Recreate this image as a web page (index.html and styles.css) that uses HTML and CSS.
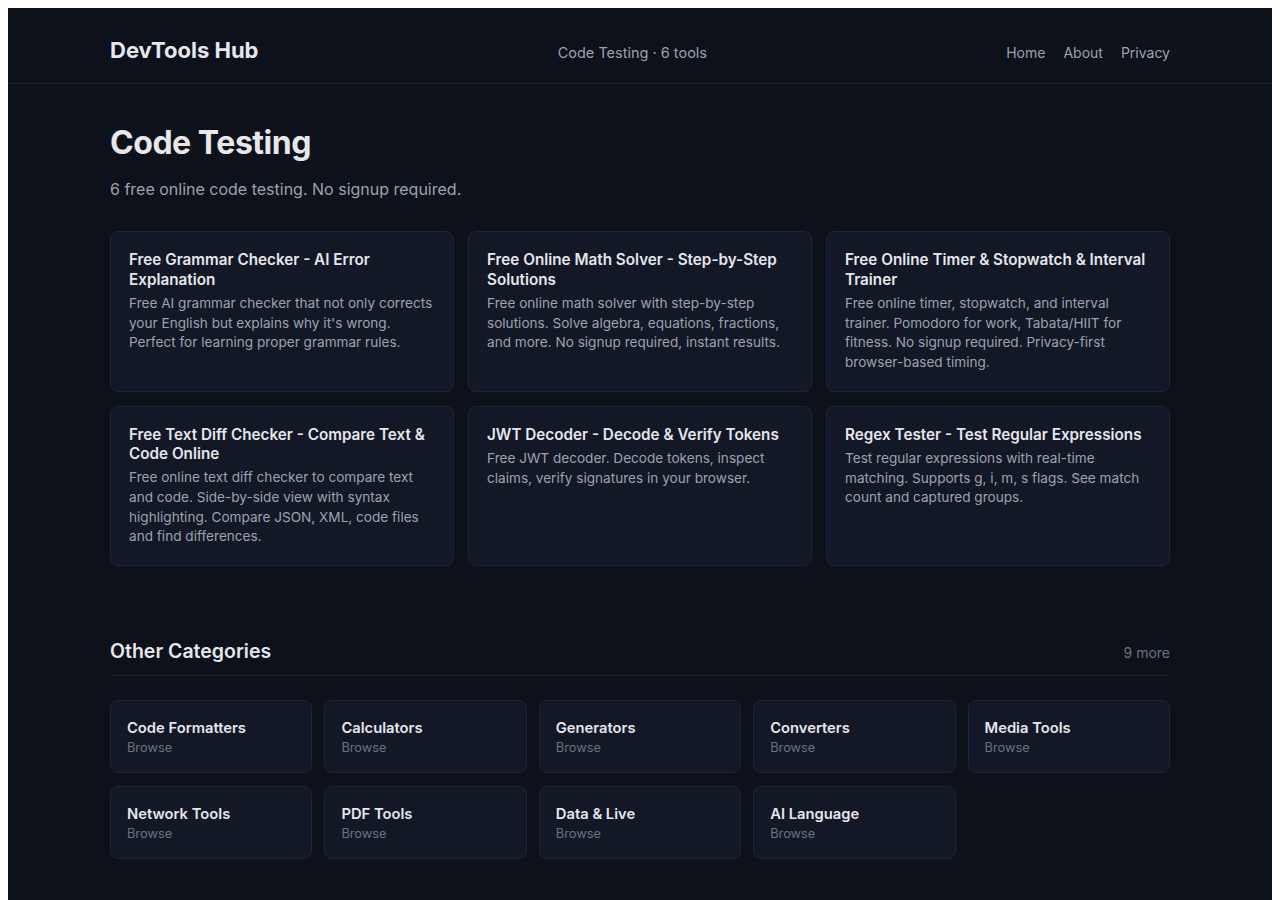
FILE: index.html
```html
<!DOCTYPE html>
<html lang="en">
<head>
<meta charset="utf-8">
<title>Code Testing - DevTools Hub</title>
<link rel="stylesheet" href="styles.css">
</head>
<body>
<div class="page">
  <header class="site-header">
    <div class="container header-inner">
      <a class="logo" href="#">DevTools Hub</a>
      <span class="crumb">Code Testing · 6 tools</span>
      <nav class="nav">
        <a href="#">Home</a>
        <a href="#">About</a>
        <a href="#">Privacy</a>
      </nav>
    </div>
  </header>
  <main class="container main">
    <h1 class="page-title">Code Testing</h1>
    <p class="page-sub">6 free online code testing. No signup required.</p>
    <div class="tool-grid">
      <a class="tool-card" href="#">
        <h2 class="tool-title">Free Grammar Checker - AI Error Explanation</h2>
        <p class="tool-desc">Free AI grammar checker that not only corrects your English but explains why it's wrong. Perfect for learning proper grammar rules.</p>
      </a>
      <a class="tool-card" href="#">
        <h2 class="tool-title">Free Online Math Solver - Step-by-Step Solutions</h2>
        <p class="tool-desc">Free online math solver with step-by-step solutions. Solve algebra, equations, fractions, and more. No signup required, instant results.</p>
      </a>
      <a class="tool-card" href="#">
        <h2 class="tool-title">Free Online Timer &amp; Stopwatch &amp; Interval Trainer</h2>
        <p class="tool-desc">Free online timer, stopwatch, and interval trainer. Pomodoro for work, Tabata/HIIT for fitness. No signup required. Privacy-first browser-based timing.</p>
      </a>
      <a class="tool-card" href="#">
        <h2 class="tool-title">Free Text Diff Checker - Compare Text &amp; Code Online</h2>
        <p class="tool-desc">Free online text diff checker to compare text and code. Side-by-side view with syntax highlighting. Compare JSON, XML, code files and find differences.</p>
      </a>
      <a class="tool-card" href="#">
        <h2 class="tool-title">JWT Decoder - Decode &amp; Verify Tokens</h2>
        <p class="tool-desc">Free JWT decoder. Decode tokens, inspect claims, verify signatures in your browser.</p>
      </a>
      <a class="tool-card" href="#">
        <h2 class="tool-title">Regex Tester - Test Regular Expressions</h2>
        <p class="tool-desc">Test regular expressions with real-time matching. Supports g, i, m, s flags. See match count and captured groups.</p>
      </a>
    </div>

    <section class="other">
      <div class="other-head">
        <h2 class="other-title">Other Categories</h2>
        <span class="other-count">9 more</span>
      </div>
      <div class="cat-grid">
        <a class="cat-card" href="#"><span class="cat-name">Code Formatters</span><span class="cat-link">Browse</span></a>
        <a class="cat-card" href="#"><span class="cat-name">Calculators</span><span class="cat-link">Browse</span></a>
        <a class="cat-card" href="#"><span class="cat-name">Generators</span><span class="cat-link">Browse</span></a>
        <a class="cat-card" href="#"><span class="cat-name">Converters</span><span class="cat-link">Browse</span></a>
        <a class="cat-card" href="#"><span class="cat-name">Media Tools</span><span class="cat-link">Browse</span></a>
        <a class="cat-card" href="#"><span class="cat-name">Network Tools</span><span class="cat-link">Browse</span></a>
        <a class="cat-card" href="#"><span class="cat-name">PDF Tools</span><span class="cat-link">Browse</span></a>
        <a class="cat-card" href="#"><span class="cat-name">Data &amp; Live</span><span class="cat-link">Browse</span></a>
        <a class="cat-card" href="#"><span class="cat-name">AI Language</span><span class="cat-link">Browse</span></a>
      </div>
    </section>
  </main>
</div>
</body>
</html>
```

FILE: styles.css
```css
* { box-sizing: border-box; }

body {
  margin: 8px;
  background: #ffffff;
  font-family: Inter, "Noto Sans", "Liberation Sans", sans-serif;
}

a { text-decoration: none; color: inherit; }

.page {
  background: #0d1119;
  color: #e5e7eb;
  min-height: 1000px;
}

.container {
  max-width: 1060px;
  margin: 0 auto;
}

.site-header {
  border-bottom: 1px solid #1c2130;
}

.header-inner {
  display: flex;
  align-items: baseline;
  justify-content: space-between;
  padding: 29px 0 20px;
}

.logo {
  font-size: 22px;
  font-weight: 700;
  line-height: 1.2;
  color: #e5e7eb;
}

.crumb {
  font-size: 14.5px;
  color: #9ca3af;
}

.nav {
  display: flex;
  gap: 18px;
  font-size: 14px;
  color: #9ca3af;
}

.main {
  padding: 39px 0 80px;
}

.page-title {
  margin: 0;
  font-size: 32px;
  line-height: 40px;
  font-weight: 700;
  color: #e5e7eb;
  letter-spacing: -0.45px;
}

.page-sub {
  margin: 14px 0 0;
  font-size: 16px;
  line-height: 24px;
  color: #9ca3af;
}

.tool-grid {
  margin-top: 30px;
  display: grid;
  grid-template-columns: repeat(3, 1fr);
  gap: 14px;
}

.tool-card {
  display: block;
  background: #121826;
  border: 1px solid #1f2535;
  border-radius: 8px;
  padding: 18px;
}

.tool-title {
  margin: 0;
  font-size: 15.25px;
  line-height: 19.4px;
  font-weight: 600;
  color: #e5e7eb;
}

.tool-desc {
  margin: 5px 0 0;
  font-size: 13.6px;
  line-height: 19.6px;
  color: #9ca3af;
}

.other {
  margin-top: 73px;
}

.other-head {
  display: flex;
  justify-content: space-between;
  align-items: baseline;
  padding-bottom: 12px;
  border-bottom: 1px solid #1c2130;
}

.other-title {
  margin: 0;
  font-size: 19.5px;
  line-height: 24px;
  font-weight: 600;
  color: #e5e7eb;
}

.other-count {
  font-size: 14px;
  color: #6b7280;
}

.cat-grid {
  margin-top: 24px;
  display: grid;
  grid-template-columns: repeat(5, 1fr);
  gap: 13px 12px;
}

.cat-card {
  display: flex;
  flex-direction: column;
  background: #121826;
  border: 1px solid #1f2535;
  border-radius: 8px;
  padding: 16px;
}

.cat-name {
  font-size: 14.75px;
  line-height: 22px;
  font-weight: 600;
  color: #e5e7eb;
}

.cat-link {
  font-size: 12.8px;
  line-height: 17px;
  color: #6b7280;
}
```
